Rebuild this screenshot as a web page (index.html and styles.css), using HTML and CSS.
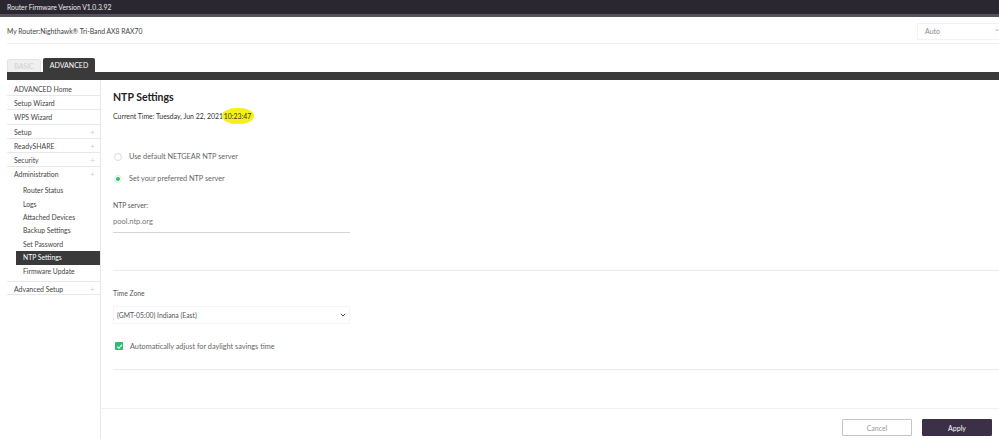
FILE: index.html
```html
<!DOCTYPE html>
<html>
<head>
<meta charset="utf-8">
<link rel="stylesheet" href="styles.css">
</head>
<body>
<div class="topbar">Router Firmware Version V1.0.3.92</div>
<div class="routerbar">
  <div class="routername">My Router:Nighthawk® Tri-Band AX8 RAX70</div>
  <div class="lang">Auto <span class="lang-caret">⌄</span></div>
</div>
<div class="tabs">
  <div class="tab tab-basic">BASIC</div>
  <div class="tab tab-adv">ADVANCED</div>
</div>
<div class="darkbar"></div>
<div class="layout">
  <nav class="sidebar">
    <div class="item">ADVANCED Home</div>
    <div class="item">Setup Wizard</div>
    <div class="item">WPS Wizard</div>
    <div class="item">Setup<span class="plus">+</span></div>
    <div class="item">ReadySHARE<span class="plus">+</span></div>
    <div class="item">Security<span class="plus">+</span></div>
    <div class="item item-open">Administration<span class="plus">+</span></div>
    <div class="sub">
      <div class="subitem">Router Status</div>
      <div class="subitem">Logs</div>
      <div class="subitem">Attached Devices</div>
      <div class="subitem">Backup Settings</div>
      <div class="subitem">Set Password</div>
      <div class="subitem active">NTP Settings</div>
      <div class="subitem">Firmware Update</div>
    </div>
    <div class="item item-last">Advanced Setup<span class="plus">+</span></div>
  </nav>
  <main class="main">
    <div class="content">
      <h1 class="title">NTP Settings</h1>
      <div class="curtime">Current Time: Tuesday, Jun 22, 2021 <span class="hl">10:23:47</span></div>
      <div class="radio-row first"><span class="radio"></span>Use default NETGEAR NTP server</div>
      <div class="radio-row"><span class="radio on"></span>Set your preferred NTP server</div>
      <div class="label ntp-label">NTP server:</div>
      <div class="input">pool.ntp.org</div>
      <div class="sep sep1"></div>
      <div class="label tz-label">Time Zone</div>
      <div class="select">(GMT-05:00) Indiana (East)
        <svg class="chev" width="6" height="4" viewBox="0 0 6 4"><path d="M0.8 0.8 L3 3 L5.2 0.8" fill="none" stroke="#444" stroke-width="1"/></svg>
      </div>
      <div class="check-row"><span class="check"><svg width="7" height="7" viewBox="0 0 7 7"><path d="M1.2 3.6 L2.9 5.2 L5.9 1.8" fill="none" stroke="#fff" stroke-width="1.2"/></svg></span>Automatically adjust for daylight savings time</div>
      <div class="sep sep2"></div>
    </div>
    <div class="footer">
      <button class="btn btn-cancel">Cancel</button>
      <button class="btn btn-apply">Apply</button>
    </div>
  </main>
</div>
</body>
</html>
```
FILE: styles.css
```css
* { box-sizing: border-box; }
html, body { margin: 0; padding: 0; background: #fff; }
body {
  font-family: Lato, "Open Sans", "Liberation Sans", sans-serif;
  font-size: 7px;
  color: #444;
  width: 999px;
  height: 439px;
  overflow: hidden;
}
.topbar {
  height: 17px;
  background: #2b2730;
  border-bottom: 3px solid #56525b;
  color: #ececec;
  padding-left: 7px;
  line-height: 15px;
  font-size: 6.8px;
}
.routerbar {
  height: 27px;
  margin-left: 7px;
  border-bottom: 1px solid #f0f0f0;
  display: flex;
  align-items: center;
  justify-content: space-between;
}
.routername { color: #444; font-size: 6.8px; padding-top: 1px; }
.lang {
  width: 82px;
  height: 17px;
  border: 1px solid #f3f3f3;
  border-right: none;
  color: #888;
  padding-left: 7px;
  line-height: 15px;
  font-size: 7px;
  margin-top: 2px;
  position: relative;
}
.lang-caret { position: absolute; right: -1px; top: -3px; color: #999; }
.tabs {
  height: 28px;
  display: flex;
  align-items: flex-end;
  padding-left: 7px;
  gap: 2px;
}
.tab {
  height: 13px;
  line-height: 13px;
  font-size: 7px;
  text-align: center;
  border-radius: 2px 2px 0 0;
}
.tab-basic {
  width: 34px;
  background: #efefef;
  color: #cfcfcf;
  border: 1px solid #e4e4e4;
  border-bottom: none;
}
.tab-adv {
  width: 52px;
  height: 14px;
  line-height: 14px;
  background: #3a3a3a;
  color: #fff;
}
.darkbar {
  height: 8px;
  margin-left: 7px;
  background: #3a3a3a;
}
.layout {
  display: flex;
  padding-left: 7px;
  height: 359px;
}
.sidebar {
  width: 93px;
  padding-top: 2px;
  flex: none;
}
.item {
  height: 14.2px;
  line-height: 14px;
  padding-left: 7px;
  border-bottom: 1px solid #e8e8e8;
  color: #444;
  font-size: 6.9px;
  position: relative;
}
.item-open { border-bottom: none; }
.item-last { border-top: 1px solid #e8e8e8; }
.plus {
  position: absolute;
  right: 5px;
  top: 0;
  color: #cfcfcf;
  font-size: 8px;
}
.sub { padding-top: 3px; padding-bottom: 3px; }
.subitem {
  height: 13.4px;
  line-height: 13.4px;
  margin-left: 9px;
  padding-left: 7px;
  color: #444;
  font-size: 6.8px;
}
.subitem.active { background: #3a3a3a; color: #fff; }
.main {
  flex: 1;
  display: flex;
  flex-direction: column;
  border-left: 1px solid #e8e8e8;
}
.content {
  flex: 1;
  padding-left: 12px;
  padding-top: 10px;
  max-height: 328px;
}
.title {
  margin: 0;
  font-size: 10.5px;
  font-weight: 700;
  line-height: 14px;
  color: #222;
}
.curtime {
  margin-top: 7px;
  line-height: 10px;
  font-size: 6.9px;
  color: #333;
}
.hl {
  background: #f6f01a;
  border-radius: 45% / 50%;
  padding: 4px 3px 4px 2px;
  margin-left: -3px;
}
.radio-row {
  height: 12px;
  line-height: 12px;
  display: flex;
  align-items: center;
  color: #666;
  font-size: 7.3px;
  margin-top: 10px;
}
.radio-row.first { margin-top: 30px; }
.radio {
  width: 8px;
  height: 8px;
  border-radius: 50%;
  border: 1px solid #dcdcdc;
  margin-left: 1px;
  margin-right: 7px;
  position: relative;
}
.radio.on {
  border-color: #d3efdd;
  background: #fff;
}
.radio.on::after {
  content: "";
  position: absolute;
  left: 1px;
  top: 1px;
  width: 4px;
  height: 4px;
  border-radius: 50%;
  background: #2dbd6e;
}
.label {
  line-height: 10px;
  font-size: 6.8px;
  color: #555;
}
.ntp-label { margin-top: 15px; }
.input {
  width: 237px;
  height: 17px;
  margin-top: 6px;
  border-bottom: 1px solid #d4d4d4;
  line-height: 11px;
  font-size: 7.5px;
  color: #777;
}
.sep {
  height: 1px;
  background: #ebebeb;
}
.sep1 { margin-top: 37px; }
.tz-label { margin-top: 17px; }
.select {
  width: 237px;
  height: 18px;
  margin-top: 8px;
  border: 1px solid #f5f5f5;
  line-height: 16px;
  padding-left: 3px;
  font-size: 6.8px;
  color: #555;
  position: relative;
}
.chev { position: absolute; right: 3px; top: 6px; }
.check-row {
  height: 12px;
  margin-top: 16px;
  display: flex;
  align-items: center;
  color: #666;
  font-size: 7.3px;
}
.check {
  width: 8px;
  height: 8px;
  border-radius: 1px;
  background: #2dbd6e;
  margin-left: 2px;
  margin-right: 7px;
  display: flex;
  align-items: center;
  justify-content: center;
}
.check svg { display: block; }
.sep2 { margin-top: 17px; }
.footer {
  border-top: 1px solid #efefef;
  height: 31px;
  display: flex;
  justify-content: flex-end;
  align-items: flex-start;
  padding-top: 10px;
  padding-right: 7px;
  gap: 10px;
  margin-left: -1px;
}
.btn {
  width: 70px;
  height: 17px;
  font-family: Lato, "Open Sans", "Liberation Sans", sans-serif;
  font-size: 7px;
  border-radius: 1px;
  padding: 0;
}
.btn-cancel {
  background: #fff;
  border: 1px solid #c4c4c4;
  color: #999;
}
.btn-apply {
  background: #3b3047;
  border: 1px solid #3b3047;
  color: #fff;
}
```
